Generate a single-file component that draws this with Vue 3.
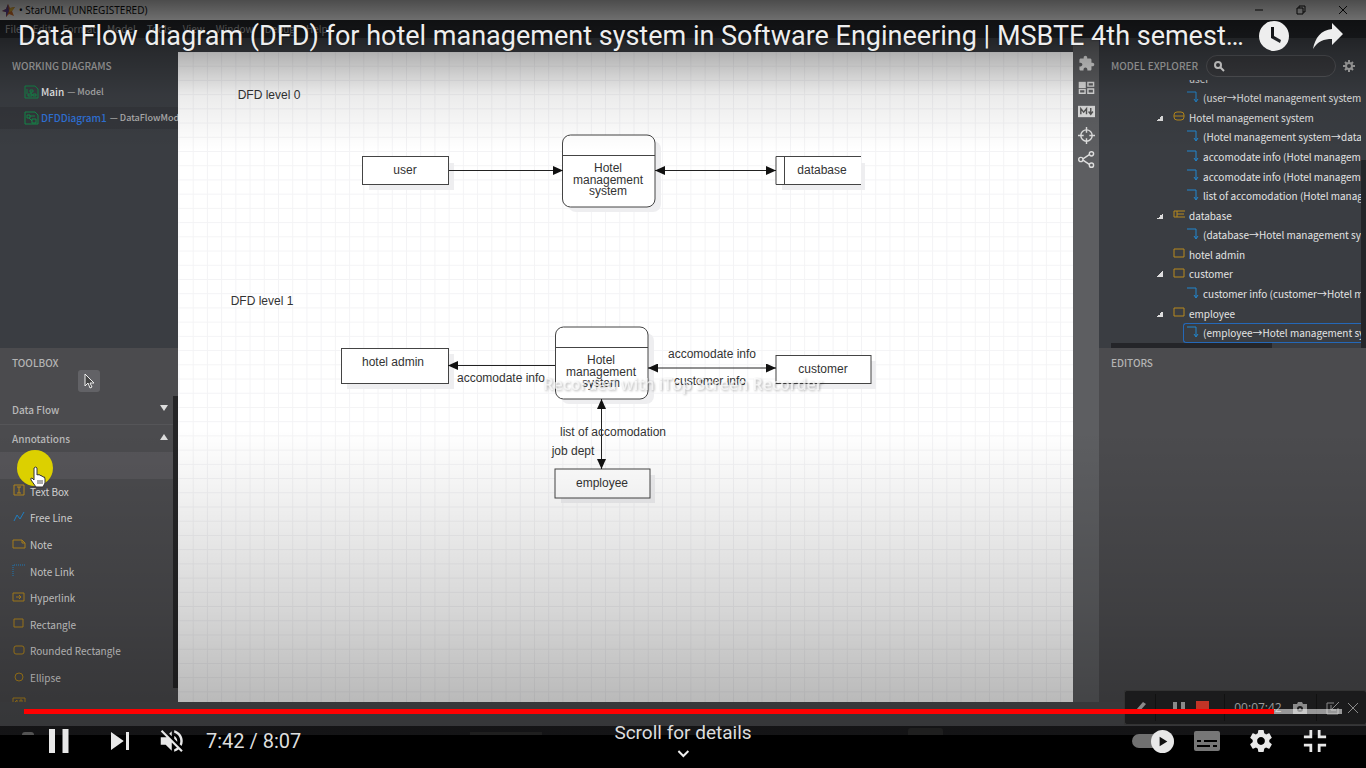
<script setup>
import { ref } from 'vue'

const menus = ['File', 'Edit', 'Format', 'Model', 'Tools', 'View', 'Window', 'Debug', 'Help']

const tree = [
  { level: 1, icon: '', text: 'user' },
  { level: 2, icon: 'flow', text: '(user→Hotel management system→user)' },
  { level: 1, icon: 'process', text: 'Hotel management system', open: true },
  { level: 2, icon: 'flow', text: '(Hotel management system→database)' },
  { level: 2, icon: 'flow', text: 'accomodate info (Hotel management system→customer)' },
  { level: 2, icon: 'flow', text: 'accomodate info (Hotel management system→hotel admin)' },
  { level: 2, icon: 'flow', text: 'list of accomodation (Hotel management system→employee)' },
  { level: 1, icon: 'store', text: 'database', open: true },
  { level: 2, icon: 'flow', text: '(database→Hotel management system)' },
  { level: 1, icon: 'box', text: 'hotel admin' },
  { level: 1, icon: 'box', text: 'customer', open: true },
  { level: 2, icon: 'flow', text: 'customer info (customer→Hotel management system)' },
  { level: 1, icon: 'box', text: 'employee', open: true },
  { level: 2, icon: 'flow', text: '(employee→Hotel management system)', selected: true },
]

const tools = [
  { icon: '', text: '', hot: true },
  { icon: 'textbox', text: 'Text Box' },
  { icon: 'line', text: 'Free Line' },
  { icon: 'note', text: 'Note' },
  { icon: 'link', text: 'Note Link' },
  { icon: 'hyper', text: 'Hyperlink' },
  { icon: 'rect', text: 'Rectangle' },
  { icon: 'round', text: 'Rounded Rectangle' },
  { icon: 'ellipse', text: 'Ellipse' },
  { icon: 'image', text: '' },
]

const position = ref(462)
const duration = 487
</script>

<template>
  <div class="player">
    <div class="video">
      <header class="titlebar">
        <svg class="logo" viewBox="0 0 14 14"><path d="M6 1l2 4 5-1-3 4 2 5-5-2-3 3V9L0 8l4-2z" fill="#e0782e" /><path d="M6 1l1 7-3 6V9L0 8l4-2z" fill="#6a4a9c" /><path d="M8 5l5-1-3 4-3 1z" fill="#f0c040" /></svg>
        <span class="app-name">• StarUML (UNREGISTERED)</span>
        <div class="win-buttons">
          <button aria-label="Minimize"><svg viewBox="0 0 10 10"><path d="M1 5h8" /></svg></button>
          <button aria-label="Restore"><svg viewBox="0 0 10 10"><path d="M1 3h6v6H1zM3 3V1h6v6H7" /></svg></button>
          <button aria-label="Close window"><svg viewBox="0 0 10 10"><path d="M1 1l8 8M9 1l-8 8" /></svg></button>
        </div>
      </header>
      <nav class="menubar">
        <button v-for="m in menus" :key="m">{{ m }}</button>
      </nav>

      <div class="workspace">
        <aside class="left">
          <section class="working">
            <h2>WORKING DIAGRAMS</h2>
            <button class="diagram">
              <svg viewBox="0 0 15 14"><path d="M1 1h10l3 3v9H1zM5 9h3v2H4V9zM9 9h3v2H9zM6 5h3v2H6zM7 7v2M3 4v5" /></svg>
              <b>Main</b><span>— Model</span>
            </button>
            <button class="diagram current">
              <svg viewBox="0 0 15 14"><path d="M1 1h10l3 3v9H1zM3 4h3v3H3zM6 5h5M5 7l3 3M8 8h4v4H8z" /></svg>
              <b>DFDDiagram1</b><span>— DataFlowModel</span>
            </button>
          </section>
          <section class="toolbox">
            <h2>TOOLBOX</h2>
            <button class="pointer" aria-label="Select">
              <svg viewBox="0 0 12 16"><path d="M2 1v12l3-3 2 5 2-1-2-4h4z" /></svg>
            </button>
            <button class="group">Data Flow<i class="down"></i></button>
            <button class="group second">Annotations<i class="up"></i></button>
            <ul class="tools">
              <li v-for="(t, i) in tools" :key="i" :class="{ hot: t.hot }">
                <button :aria-label="t.text || 'Tool'">
                  <svg viewBox="0 0 12 12">
                    <path v-if="t.icon === 'textbox'" d="M1 1h10v10H1zM4 3h4M6 3v6M4 9h4" />
                    <path v-if="t.icon === 'line'" class="blue" d="M1 10l3-6 3 4 4-7" />
                    <path v-if="t.icon === 'note'" d="M0 2h9l3 3v5H0zM9 2v3h3" />
                    <path v-if="t.icon === 'link'" class="blue dots" d="M0 12V1h12" />
                    <path v-if="t.icon === 'hyper'" d="M0 2h11v8H0zM3 6h5M6 4l2 2-2 2" />
                    <path v-if="t.icon === 'rect'" d="M1 2h9v8H1z" />
                    <rect v-if="t.icon === 'round'" x="1" y="2" width="10" height="8" rx="2" />
                    <circle v-if="t.icon === 'ellipse'" cx="6" cy="6" r="4" />
                    <path v-if="t.icon === 'image'" d="M0 1h12v10H0zM2 5l2-2v4M7 3h2v4H7z" />
                  </svg>
                  <span>{{ t.text }}</span>
                </button>
                <template v-if="t.hot">
                  <span class="spot"></span>
                  <svg class="hand" viewBox="0 0 16 22"><path d="M4 2q2-2 3 0v7q1-1 2 0 1-1 2 1 1-1 2 1 2-1 2 2v4l-2 4H6l-5-7q-1-2 1-2l2 2z" /><path class="creases" d="M8 14v4M10 14v4M12 14v4" /></svg>
                </template>
              </li>
            </ul>
            <div class="toolbox-scroll"></div>
          </section>
        </aside>

        <main class="canvas">
          <svg class="diagram-area" width="1188" height="650" viewBox="178 52 1188 650">
            <defs>
              <pattern id="grid" x="192.7" y="65.7" width="14.22" height="14.22" patternUnits="userSpaceOnUse">
                <path d="M0 .5H15M.5 0V15" stroke="#f3f3f5" fill="none" />
              </pattern>
              <marker id="head" viewBox="0 0 10 9" refX="10" refY="4.5" markerWidth="10" markerHeight="9" markerUnits="userSpaceOnUse" orient="auto-start-reverse">
                <path d="M0 0l10 4.5L0 9z" fill="#111" />
              </marker>
            </defs>
            <rect x="178" y="52" width="1188" height="650" fill="url(#grid)" />
            <g class="shadow">
              <rect x="369" y="163" width="85" height="27" />
              <rect x="568" y="141" width="93" height="71" rx="8" />
              <rect x="782" y="163" width="83" height="27" />
              <rect x="347" y="354" width="107" height="35" />
              <rect x="561" y="333" width="93" height="71" rx="8" />
              <rect x="782" y="361" width="94" height="28" />
              <rect x="561" y="475" width="94" height="28" />
            </g>
            <g class="shape">
              <rect x="362.5" y="156.5" width="86" height="28" />
              <rect x="562.5" y="135" width="92.5" height="72" rx="8" />
              <path d="M562.5 155.500H655" />
              <path class="plain" d="M776 156h85v29h-85z" />
              <path d="M861 156.500h-85v28h85M784.500 156.500v28" />
              <rect x="341.500" y="348.500" width="107" height="35" />
              <rect x="555.500" y="327" width="92.500" height="72" rx="8" />
              <path d="M555.500 347.500H648" />
              <rect x="776" y="355.500" width="95" height="28" />
              <rect x="555" y="469" width="95" height="29" />
            </g>
            <g class="flows">
              <path d="M449 170.500H563" marker-end="url(#head)" />
              <path d="M655 170.500H776" marker-start="url(#head)" marker-end="url(#head)" />
              <path d="M555 365.500H448" marker-end="url(#head)" />
              <path d="M648 368H776" marker-start="url(#head)" marker-end="url(#head)" />
              <path d="M601.500 399V469" marker-start="url(#head)" marker-end="url(#head)" />
            </g>
            <g class="labels">
              <text x="269" y="99">DFD level 0</text>
              <text x="405" y="174">user</text>
              <text x="608" y="172">Hotel</text>
              <text x="608" y="184">management</text>
              <text x="608" y="195">system</text>
              <text x="822" y="174">database</text>
              <text x="262" y="305">DFD level 1</text>
              <text x="393" y="366">hotel admin</text>
              <text x="501" y="382">accomodate info</text>
              <text x="601" y="364">Hotel</text>
              <text x="601" y="376">management</text>
              <text x="601" y="387">system</text>
              <text x="712" y="358">accomodate info</text>
              <text x="710" y="385">customer info</text>
              <text x="823" y="373">customer</text>
              <text x="613" y="436">list of accomodation</text>
              <text x="573" y="455">job dept</text>
              <text x="602" y="487">employee</text>
            </g>
            <text class="watermark" x="683" y="390">Recorded with iTop Screen Recorder</text>
          </svg>
        </main>

        <div class="strip">
          <button aria-label="Extensions"><svg viewBox="0 0 24 24"><path class="fill" d="M20.500 11H19V7c0-1.100-.9-2-2-2h-4V3.500C13 2.100 11.900 1 10.500 1S8 2.100 8 3.500V5H4c-1.100 0-2 .9-2 2v3.800h1.500c1.500 0 2.700 1.200 2.700 2.700S5 16.200 3.500 16.200H2V20c0 1.100.9 2 2 2h3.800v-1.500c0-1.500 1.200-2.700 2.700-2.700s2.700 1.200 2.700 2.700V22H17c1.100 0 2-.9 2-2v-4h1.500c1.400 0 2.500-1.100 2.500-2.500S21.900 11 20.500 11z" /></svg></button>
          <button aria-label="Layout"><svg viewBox="0 0 24 24"><path class="fill" d="M1 4h10v9H1z" /><path d="M2 15h8v5H2zM14 5h8v5h-8zM14 14h8v6h-8z" /></svg></button>
          <button aria-label="Markdown"><svg viewBox="0 0 24 24"><path class="fill" d="M0 4h24v16H0z" /><path class="cut" d="M4 16V8l4 5 4-5v8M18 7v8M15 12l3 4 3-4" /></svg></button>
          <button aria-label="Locate"><svg viewBox="0 0 24 24"><circle cx="12" cy="12" r="8" /><path d="M12 0v8M12 16v8M0 12h8M16 12h8" /></svg></button>
          <button aria-label="Share model"><svg viewBox="0 0 24 24"><circle cx="4" cy="12" r="3" /><circle cx="19" cy="4" r="3" /><circle cx="19" cy="20" r="3" /><path d="M7 11l9-6M7 13l9 6" /></svg></button>
        </div>

        <aside class="right">
          <section class="explorer">
            <div class="explorer-head">
              <h2 id="explorer-label">MODEL EXPLORER</h2>
              <div class="search">
                <svg viewBox="0 0 12 12"><circle cx="5" cy="5" r="3" /><path d="M7 7l4 4" /></svg>
                <input type="text" aria-labelledby="explorer-label" />
              </div>
              <button class="gear" aria-label="Explorer settings"><svg viewBox="0 0 14 14"><circle cx="7" cy="7" r="3" /><path d="M7 1v3M7 10v3M1 7h3M10 7h3M3 3l2 2M9 9l2 2M11 3L9 5M5 9l-2 2" /></svg></button>
            </div>
            <div class="tree-view">
              <ul class="tree">
                <li v-for="(n, i) in tree" :key="i" :class="['level' + n.level, { selected: n.selected }]">
                  <i v-if="n.level === 1" :class="['expander', { open: n.open }]"></i>
                  <svg viewBox="0 0 12 12">
                    <path v-if="n.icon === 'flow'" class="blue" d="M0 1h9v9M7 8l2 3 2-3" />
                    <path v-if="n.icon === 'box'" d="M1 2h10v8H1z" />
                    <path v-if="n.icon === 'store'" d="M12 3H1v6h11M4 3v6M4 6h7" />
                    <g v-if="n.icon === 'process'"><rect x="1" y="2" width="10" height="8" rx="3" /><path d="M1 6h10" /></g>
                  </svg>
                  <span>{{ n.text }}</span>
                </li>
              </ul>
            </div>
            <div class="v-scroll"></div>
            <div class="h-scroll"></div>
          </section>
          <section class="editors"><h2>EDITORS</h2></section>
        </aside>
      </div>

      <div class="statusbar"></div>
      <div class="taskbar"><i class="orb"></i><i class="tile"></i><i class="tile small"></i></div>
    </div>
    <div class="letterbox"></div>

    <div class="shade top-shade"></div>
    <div class="shade bottom-shade"></div>

    <div class="recorder">
      <span><svg viewBox="0 0 14 14"><path class="fill" d="M10 1l3 2-7 8-3-2zM2 9l3 3-4 1z" /></svg></span>
      <span class="pair"><svg viewBox="0 0 14 14"><path class="fill" d="M1 1h4v12H1zM9 1h4v12H9z" /></svg><i class="stop"></i></span>
      <span class="clock">00:07:42<svg viewBox="0 0 14 14"><path class="fill" fill-rule="evenodd" d="M0 3h4l1-2h4l1 2h4v10H0zM7 5a3 3 0 100 6 3 3 0 000-6z" /><circle class="fill" cx="7" cy="8" r="1" /></svg></span>
      <span class="last"><svg viewBox="0 0 14 14"><path d="M8 2H1v11h11V7M13 1L6 8M5 4v5h5" /></svg><svg viewBox="0 0 14 14"><path d="M2 2l10 10M12 2L2 12" /></svg></span>
    </div>

    <div class="headline">
      <h1>Data Flow diagram (DFD) for hotel management system in Software Engineering | MSBTE 4th semest…</h1>
      <button aria-label="Watch later"><svg viewBox="0 0 30 30"><path fill-rule="evenodd" d="M15 0a15 15 0 100 30 15 15 0 000-30zM12 6h3v9l7 4-1 3-9-5z" /></svg></button>
      <button aria-label="Share"><svg viewBox="0 0 30 30"><path d="M19 2l11 11-11 11v-6C11 18 5 20 0 28 2 17 8 9 19 8z" /></svg></button>
    </div>

    <input v-model="position" class="progress" type="range" min="0" :max="duration" aria-label="Seek" :style="{ '--played': (position / duration) * 100 + '%' }" />

    <div class="controls">
      <button aria-label="Pause"><svg viewBox="0 0 36 36"><path d="M12 26h4V10h-4zM21 26h4V10h-4z" /></svg></button>
      <button aria-label="Next"><svg viewBox="0 0 36 36"><path d="M12 24l8.500-6L12 12zM22 12v12h2V12z" /></svg></button>
      <button class="mute" aria-label="Unmute"><svg viewBox="0 0 36 36"><path d="m21.480 17.980c0-1.770-1.020-3.290-2.500-4.030v2.210l2.450 2.450c.03-.2.05-.41.05-.63zm2.500 0c0 .94-.2 1.820-.54 2.640l1.510 1.510c.66-1.240 1.030-2.650 1.030-4.150 0-4.280-2.990-7.860-7-8.760v2.050c2.890.86 5 3.540 5 6.710zM9.250 8.980l-1.270 1.260 4.720 4.730H7.980v6h4l5 5v-6.730l4.250 4.250c-.67.52-1.420.93-2.250 1.180v2.060c1.380-.31 2.630-.95 3.690-1.810l2.040 2.050 1.270-1.270-9-9zm7.720.99l-2.090 2.080 2.090 2.090z" /></svg></button>
      <span class="time">7:42 / 8:07</span>
      <div class="spacer"></div>
      <button class="autoplay" aria-label="Autoplay"><i><svg viewBox="0 0 24 24"><path d="M9 7v10l8-5z" /></svg></i></button>
      <button class="cc" aria-label="Subtitles"><svg viewBox="0 0 26 20"><path fill-rule="evenodd" d="M2 0h22q2 0 2 2v16q0 2-2 2H2q-2 0-2-2V2q0-2 2-2zM3 9v2h4V9zM10 9v2h13V9zM3 14v2h13v-2zM19 14v2h4v-2z" /></svg></button>
      <button class="small-icon" aria-label="Settings"><svg viewBox="0 0 36 36"><path fill-rule="evenodd" d="m23.940 18.780c.03-.25.05-.51.05-.78 0-.27-.02-.52-.05-.78l1.680-1.320c.15-.12.19-.33.09-.51l-1.600-2.760c-.09-.17-.31-.24-.48-.17l-1.990.8c-.41-.32-.86-.58-1.350-.78l-.3-2.120c-.02-.19-.19-.33-.39-.33h-3.200c-.2 0-.36.14-.39.33l-.3 2.120c-.48.2-.93.47-1.350.78l-1.990-.8c-.18-.07-.39 0-.48.17l-1.600 2.760c-.1.17-.05.39.09.51l1.680 1.320c-.03.25-.05.52-.05.78 0 .26.02.52.05.78l-1.680 1.320c-.15.12-.19.33-.09.51l1.600 2.760c.09.17.31.24.48.17l1.990-.8c.41.32.86.58 1.350.78l.3 2.120c.02.19.19.33.39.33h3.200c.2 0 .36-.14.39-.33l.3-2.120c.48-.2.93-.47 1.350-.78l1.990.8c.18.07.39 0 .48-.17l1.600-2.760c.09-.17.05-.39-.09-.51zM18 20.800c-1.540 0-2.800-1.250-2.800-2.800s1.250-2.800 2.800-2.800 2.800 1.250 2.800 2.800-1.250 2.800-2.800 2.800z" /></svg></button>
      <button class="small-icon" aria-label="Exit full screen"><svg viewBox="0 0 36 36"><path d="M14 14h-4v2h6v-6h-2zM22 14v-4h-2v6h6v-2zM20 26h2v-4h4v-2h-6zM10 22h4v4h2v-6h-6z" /></svg></button>
    </div>

    <button class="details">Scroll for details<svg viewBox="0 0 12 8"><path d="M1 1l5 5 5-5" /></svg></button>
  </div>
</template>

<style>
body { background: #000; }
</style>

<style scoped>
* { box-sizing: border-box; }
.player {
  position: relative;
  display: flex;
  flex-direction: column;
  min-height: 100vh;
  background: #000;
  overflow: hidden;
  font-family: "Noto Sans CJK SC", "Noto Sans", sans-serif;
  font-size: 10px;
  font-weight: 500;
  line-height: 16px;
  color: #d0d0d0;
}
h1, h2, ul { margin: 0; padding: 0; font-weight: 400; list-style: none; }
h2 { font-size: 10px; line-height: 16px; font-weight: 500; color: #b4b4b4; white-space: nowrap; }
button { border: 0; padding: 0; background: none; color: inherit; font: inherit; }
svg { display: block; flex: none; }
.video { flex: 1; display: flex; flex-direction: column; }
.letterbox { height: 33px; }

.titlebar { display: flex; align-items: center; height: 20px; padding-left: 2px; background: #fff; color: #111; }
.app-name { font-family: "Noto Sans", sans-serif; font-weight: 400; }
.logo { width: 14px; height: 14px; margin-right: 3px; }
.win-buttons { margin-left: auto; display: flex; padding-right: 2px; }
.win-buttons button { width: 42px; display: flex; justify-content: center; }
.win-buttons svg { width: 10px; height: 10px; fill: none; stroke: #111; }
.menubar { display: flex; gap: 11px; height: 18px; padding-left: 5px; background: #24262a; color: #a0a0a0; font-weight: 400; overflow: hidden; }

.workspace { flex: 1; display: grid; grid-template-columns: 178px minmax(0, 1fr) 26px 267px; background: #3c3f44; }
.left, .right { display: flex; flex-direction: column; min-width: 0; }
.working { height: 310px; padding-top: 20px; overflow: hidden; background: #3a3d42; }
.working h2 { padding-left: 12px; margin-bottom: 7px; }
.diagram { display: flex; align-items: center; width: 100%; height: 22px; padding-left: 24px; margin-bottom: 4px; white-space: nowrap; }
.diagram svg { width: 15px; height: 14px; margin-right: 2px; fill: none; stroke: #128a4a; }
.diagram b { font-weight: 500; color: #eee; margin-right: 3px; }
.diagram span { font-size: 9px; color: #b0b0b0; }
.diagram.current { background: #34363b; }
.diagram.current b { color: #2f72d8; }

.toolbox { position: relative; flex: none; height: 354px; padding-top: 7px; overflow: hidden; background: #4b4b4e; }
.toolbox h2 { padding-left: 12px; }
.pointer { display: flex; justify-content: center; align-items: center; width: 22px; height: 22px; margin: -1px 0 0 78px; border-radius: 3px; background: #626266; }
.pointer svg { width: 12px; height: 16px; fill: #444; stroke: #eee; }
.group { display: flex; align-items: center; justify-content: space-between; width: 100%; height: 28px; padding: 0 10px 0 12px; margin-top: 4px; color: #b8b8b8; }
.group.second { margin-top: 0; border-top: 1px solid #555558; }
.group i { width: 0; border: 4px solid transparent; }
.group .down { border-top: 6px solid #ddd; border-bottom: 0; margin-top: -4px; }
.group .up { border-bottom: 6px solid #ddd; border-top: 0; margin-top: -4px; }
.tools { display: grid; grid-auto-rows: 1fr; height: 266px; }
.tools li { position: relative; display: flex; }
.tools li.hot { background: #565559; }
.tools button { display: flex; align-items: center; gap: 5px; width: 100%; padding-left: 13px; white-space: nowrap; text-align: left; }
.tools button svg { width: 12px; height: 12px; margin-top: -3px; fill: none; stroke: #b88a1c; overflow: visible; }
.tools button span { color: #dcdcdc; }
.tools button .blue, .tree .blue { stroke: #2188d0; }
.dots { stroke-dasharray: 1 1; }
.spot { position: absolute; left: 17px; top: -2px; width: 36px; height: 36px; border-radius: 50%; background: #dcd000; z-index: 1; }
.hand { position: absolute; left: 30px; top: 14px; width: 16px; height: 22px; z-index: 2; fill: #fff; stroke: #333; }
.creases { stroke: #555; }
.toolbox-scroll { position: absolute; right: 0; top: 48px; bottom: 14px; width: 5px; background: #242426; }

.canvas { margin-top: 14px; background: #fff; overflow: hidden; }
.diagram-area { display: block; }
.shadow { fill: #eeeef0; }
.shape { fill: #fff; stroke: #444; }
.shape .plain { stroke: none; }
.flows { fill: none; stroke: #222; }
.labels { font: 12px "Liberation Sans", Arial, sans-serif; fill: #333; text-anchor: middle; }
.watermark { font: 600 16px "Open Sans", sans-serif; fill: #fff; fill-opacity: .7; text-anchor: middle; filter: drop-shadow(1px 1px 1px rgba(0, 0, 0, .4)); }

.strip { display: flex; flex-direction: column; gap: 6px; padding-top: 17px; background: #5d5e61; }
.strip button { display: flex; justify-content: center; height: 18px; }
.strip svg { width: 17px; height: 17px; fill: none; stroke: #ddd; stroke-width: 2; }
.strip .fill { fill: #ddd; stroke: none; }
.strip .cut { stroke: #555; stroke-width: 2; }

.explorer { position: relative; height: 310px; padding-top: 17px; display: flex; flex-direction: column; background: #3a3d42; }
.explorer-head { display: flex; align-items: center; height: 22px; padding: 0 10px 0 12px; }
.search { flex: 1; min-width: 0; display: flex; align-items: center; height: 22px; margin: 0 6px 0 8px; padding: 0 6px; border: 1px solid #56575b; border-radius: 11px; background: #393a3e; }
.search svg { width: 12px; height: 12px; fill: none; stroke: #eee; stroke-width: 2; }
.search input { flex: 1; width: 0; min-width: 0; border: 0; padding: 0 4px; background: none; color: #ddd; font: inherit; outline: 0; }
.gear svg { width: 14px; height: 14px; fill: none; stroke: #bbb; stroke-width: 2; }
.tree-view { flex: 1; min-height: 0; display: flex; flex-direction: column; justify-content: flex-end; overflow: hidden; margin: 3px 5px 5px 0; }
.tree { flex: none; display: grid; grid-auto-rows: 1fr; height: 274px; color: #e4e4e4; }
.tree li { display: flex; align-items: center; white-space: nowrap; overflow: hidden; }
.tree li svg { width: 12px; height: 12px; margin-right: 4px; margin-top: -3px; fill: none; stroke: #b88a1c; }
.tree .level1 { padding-left: 58px; }
.tree .level2 { margin-left: 84px; padding-left: 4px; }
.tree .selected { border: 1px solid #2468b8; border-right: 0; border-radius: 3px 0 0 3px; padding-left: 3px; }
.expander { width: 6px; height: 6px; margin-right: 10px; }
.expander.open { background: linear-gradient(135deg, transparent 50%, #ddd 50%); }
.v-scroll { position: absolute; right: 0; top: 122px; bottom: 0; width: 5px; background: #242529; }
.h-scroll { position: absolute; left: 12px; bottom: 0; width: 161px; height: 5px; background: #242529; }
.editors { flex: 1; padding: 7px 12px; background: #4b4b4e; }

.statusbar { height: 24px; background: #4c4d50; }
.taskbar { display: flex; align-items: flex-end; height: 9px; padding-left: 22px; background: #1d1d1f; overflow: hidden; }
.taskbar .orb { width: 12px; height: 3px; border-radius: 6px 6px 0 0; background: #777; }
.taskbar .tile { width: 72px; height: 3px; margin-left: 436px; background: #2c2c2c; }
.taskbar .small { width: 35px; height: 7px; margin-left: 366px; border-radius: 3px 3px 0 0; background: #2c2c2c; }

.shade { position: absolute; left: 0; right: 0; pointer-events: none; }
.top-shade { top: 0; height: 150px; background: linear-gradient(rgba(0, 0, 0, .7) 0, rgba(0, 0, 0, .58) 18px, rgba(0, 0, 0, .3) 53px, rgba(0, 0, 0, .08) 95px, transparent); }
.bottom-shade { bottom: 33px; height: 305px; background: linear-gradient(transparent, rgba(0, 0, 0, .06) 70px, rgba(0, 0, 0, .16) 180px, rgba(0, 0, 0, .27) 270px, rgba(0, 0, 0, .3)); }

.recorder { position: absolute; right: 0; bottom: 43px; display: grid; grid-template-columns: 31px 69px 92px 49px; width: 242px; height: 35px; border: 1px solid #333; border-right: 0; border-radius: 3px; background: #1b1b1c; color: #9c9c9c; }
.recorder > span { display: flex; align-items: center; justify-content: center; margin: 3px 0; border-right: 1px solid #111; }
.recorder > span.last { border: 0; justify-content: space-between; padding: 0 6px 0 9px; }
.recorder svg { width: 14px; height: 14px; fill: none; stroke: #8a8a8a; }
.recorder .fill { fill: #8a8a8a; stroke: none; }
.recorder .pair { gap: 10px; }
.recorder .stop { width: 13px; height: 13px; background: #c23527; }
.recorder .clock { font: 12px "Open Sans", sans-serif; gap: 11px; }

.headline { position: absolute; top: 9px; left: 0; right: 11px; height: 54px; display: flex; align-items: center; padding-left: 18px; }
.headline h1 { flex: 1; min-width: 0; overflow: hidden; white-space: nowrap; font: 27px/36px Roboto, sans-serif; color: #eee; text-shadow: 0 0 2px rgba(0, 0, 0, .5); }
.headline button { width: 54px; display: flex; justify-content: center; }
.headline svg { width: 30px; height: 30px; fill: #eee; }

.progress { position: absolute; left: 24px; right: 24px; bottom: 54px; width: calc(100% - 48px); height: 5px; margin: 0; appearance: none; background: linear-gradient(90deg, #f00 var(--played), rgba(255, 255, 255, .55) var(--played)); }
.progress::-webkit-slider-thumb { appearance: none; width: 0; height: 0; }

.controls { position: absolute; left: 0; right: 0; bottom: 0; height: 54px; display: flex; align-items: center; gap: 8px; padding: 0 24px 0 31px; font-family: Roboto, sans-serif; font-weight: 400; color: #ddd; }
.controls button { width: 54px; height: 54px; display: flex; align-items: center; justify-content: center; }
.controls svg { width: 54px; height: 54px; fill: #e8e8e8; }
.controls .mute { width: 36px; }
.controls .mute svg { width: 44px; height: 44px; }
.controls .small-icon svg { width: 50px; height: 50px; }
.controls .spacer ~ button { margin-left: -8px; }
.controls .cc svg { width: 26px; height: 20px; fill: #777; }
.time { margin-left: 7px; font-size: 20px; line-height: 24px; white-space: nowrap; }
.spacer { flex: 1; }
.autoplay i { display: flex; justify-content: flex-end; align-items: center; width: 42px; height: 14px; border-radius: 7px; background: #707070; }
.controls .autoplay svg { width: 23px; height: 23px; border-radius: 50%; background: #e8e8e8; fill: #111; }
.details { position: absolute; left: 50%; bottom: 10px; transform: translateX(-50%); display: flex; flex-direction: column; align-items: center; gap: 5px; font: 19px/24px Roboto, sans-serif; color: #ddd; white-space: nowrap; }
.details svg { width: 12px; height: 8px; fill: none; stroke: #eee; stroke-width: 2; }
</style>
